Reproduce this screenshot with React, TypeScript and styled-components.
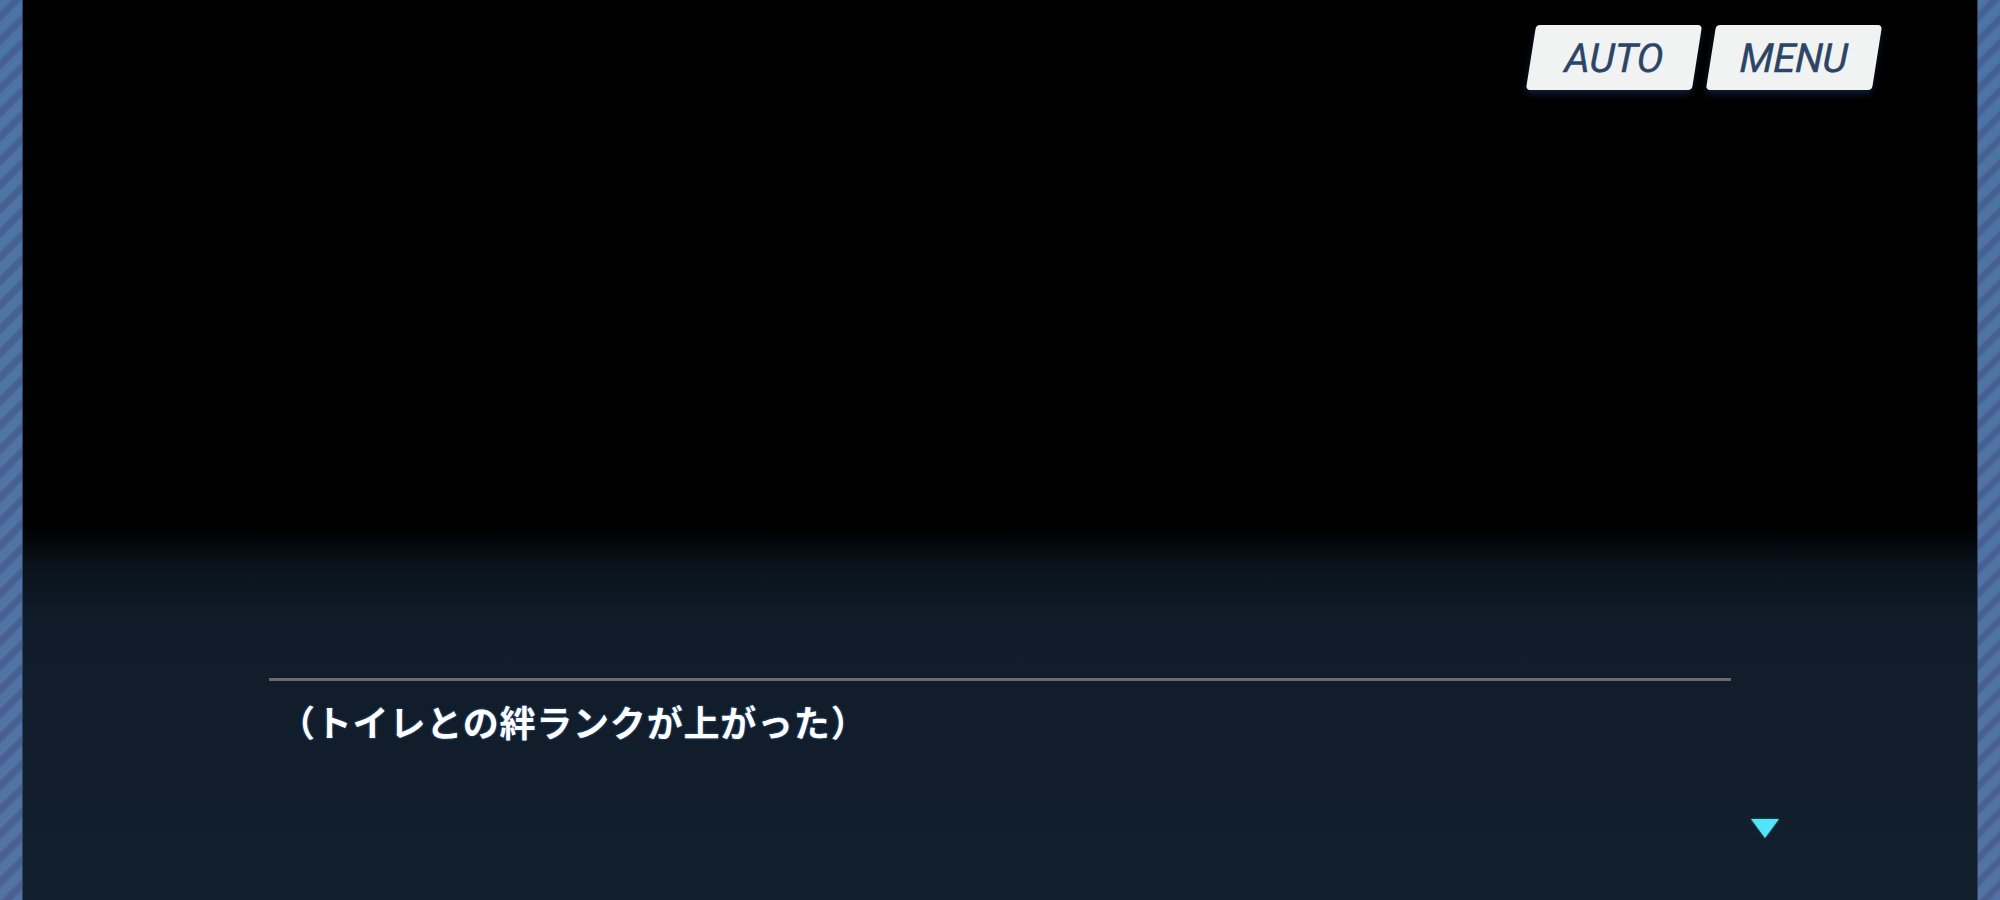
import React from "react";
import styled, { createGlobalStyle } from "styled-components";

const Global = createGlobalStyle`
  html, body, #root { margin: 0; padding: 0; height: 100%; }
  body { background: #000; overflow: hidden; }
`;

const Frame = styled.div`
  display: flex;
  width: 2000px;
  height: 900px;
`;

const Stripe = styled.div<{ $side: "left" | "right" }>`
  width: 22px;
  flex: none;
  background:
    linear-gradient(to bottom, rgba(60, 100, 160, 0.12), rgba(100, 95, 150, 0.12)),
    repeating-linear-gradient(
      135deg,
      #4f76a7 0px,
      #4f76a7 7px,
      #46608f 10px,
      #46608f 14px,
      #4f76a7 17px
    );
  ${(p) => (p.$side === "left" ? "border-right" : "border-left")}: 1px solid #2b4468;
`;

const Stage = styled.div`
  flex: 1;
  position: relative;
  display: flex;
  flex-direction: column;
  background: linear-gradient(
    to bottom,
    #000 0%,
    #000 58.5%,
    #0a131d 63%,
    #101c29 69%,
    #121f2d 100%
  );
`;

const TopBar = styled.div`
  display: flex;
  justify-content: flex-end;
  gap: 14px;
  padding: 25px 100px 0 0;
`;

const SkewButton = styled.div`
  width: 166px;
  height: 65px;
  display: flex;
  align-items: center;
  justify-content: center;
  background: #f1f3f3;
  border-radius: 4px;
  transform: skewX(-9deg);
  box-shadow: 0 4px 6px rgba(30, 55, 95, 0.55);
  font-family: Roboto, "Liberation Sans", sans-serif;
  font-style: italic;
  font-size: 40px;
  font-weight: 400;
  color: #2c4466;
  letter-spacing: -0.3px;
  padding-top: 2px;
  box-sizing: border-box;
`;

const ButtonLabel = styled.span`
  display: inline-block;
  transform: skewX(7deg);
  -webkit-text-stroke: 0.4px #2c4466;
`;

const Dialogue = styled.div`
  position: relative;
  margin: auto 246px 0 246px;
  height: 222px;
  border-top: 3px solid #6a6a6a;
  box-sizing: border-box;
`;

const Line = styled.div`
  margin: 22px 0 0 10px;
  font-family: "Noto Sans CJK JP", sans-serif;
  font-size: 36px;
  line-height: 36px;
  font-weight: 700;
  letter-spacing: 0.8px;
  color: #ffffff;
  text-shadow: 0 0 3px #2a4a7a, 0 0 2px #2a4a7a;
`;

const NextMark = styled.div`
  position: absolute;
  left: 1482px;
  top: 138px;
  width: 0;
  height: 0;
  border-left: 14px solid transparent;
  border-right: 14px solid transparent;
  border-top: 19px solid #52e4f8;
  filter: drop-shadow(0 0 1px rgba(82, 228, 248, 0.5));
`;

export default function App() {
  return (
    <>
      <Global />
      <Frame>
        <Stripe $side="left" />
        <Stage>
          <TopBar>
            <SkewButton>
              <ButtonLabel>AUTO</ButtonLabel>
            </SkewButton>
            <SkewButton>
              <ButtonLabel>MENU</ButtonLabel>
            </SkewButton>
          </TopBar>
          <Dialogue>
            <Line>（トイレとの絆ランクが上がった）</Line>
            <NextMark />
          </Dialogue>
        </Stage>
        <Stripe $side="right" />
      </Frame>
    </>
  );
}
